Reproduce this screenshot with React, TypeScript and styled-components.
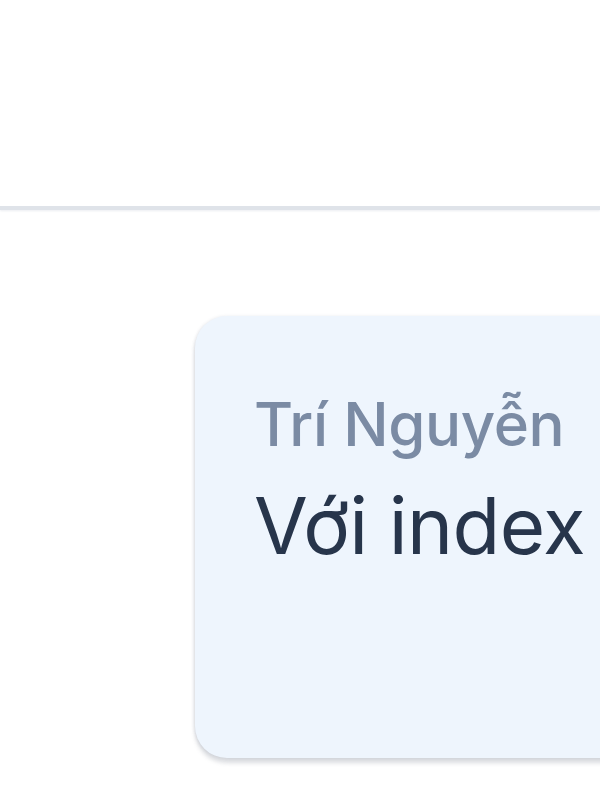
import React from 'react';
import styled, { createGlobalStyle } from 'styled-components';

const GlobalStyle = createGlobalStyle`
  html, body {
    margin: 0;
    padding: 0;
    background: #ffffff;
    overflow: hidden;
  }
  body {
    font-family: Inter, Roboto, "Noto Sans", sans-serif;
  }
`;

const Page = styled.div`
  width: 600px;
  height: 800px;
  overflow: hidden;
  display: flex;
  flex-direction: column;
  background: #ffffff;
`;

// top bar, empty in the shot
const Header = styled.header`
  height: 206px;
  flex-shrink: 0;
  border-bottom: 4px solid #dfe3e9;
  box-shadow: 0 1px 2px rgba(120, 135, 160, 0.15);
`;

const Thread = styled.main`
  flex: 1;
  display: flex;
  padding: 106px 0 0 195px;
`;

const Bubble = styled.div`
  flex-shrink: 0;
  width: 460px;
  height: 442px;
  box-sizing: border-box;
  padding: 72px 0 0 59px;
  background: #eef5fd;
  border-radius: 32px;
  box-shadow: 0 5px 4px rgba(90, 100, 120, 0.22), -1px 0 3px rgba(90, 100, 120, 0.12);
  display: flex;
  flex-direction: column;
  gap: 21px;
  white-space: nowrap;
`;

const Author = styled.div`
  font-size: 60px;
  font-weight: 500;
  line-height: 72px;
  color: #7b8ba4;
  letter-spacing: -0.4px;
`;

const Text = styled.div`
  font-size: 78px;
  font-weight: 400;
  line-height: 90px;
  color: #27354b;
  letter-spacing: -0.6px;
`;

export default function App() {
  return (
    <>
      <GlobalStyle />
      <Page>
        <Header />
        <Thread>
          <Bubble>
            <Author>Trí Nguyễn</Author>
            <Text>Với index</Text>
          </Bubble>
        </Thread>
      </Page>
    </>
  );
}
